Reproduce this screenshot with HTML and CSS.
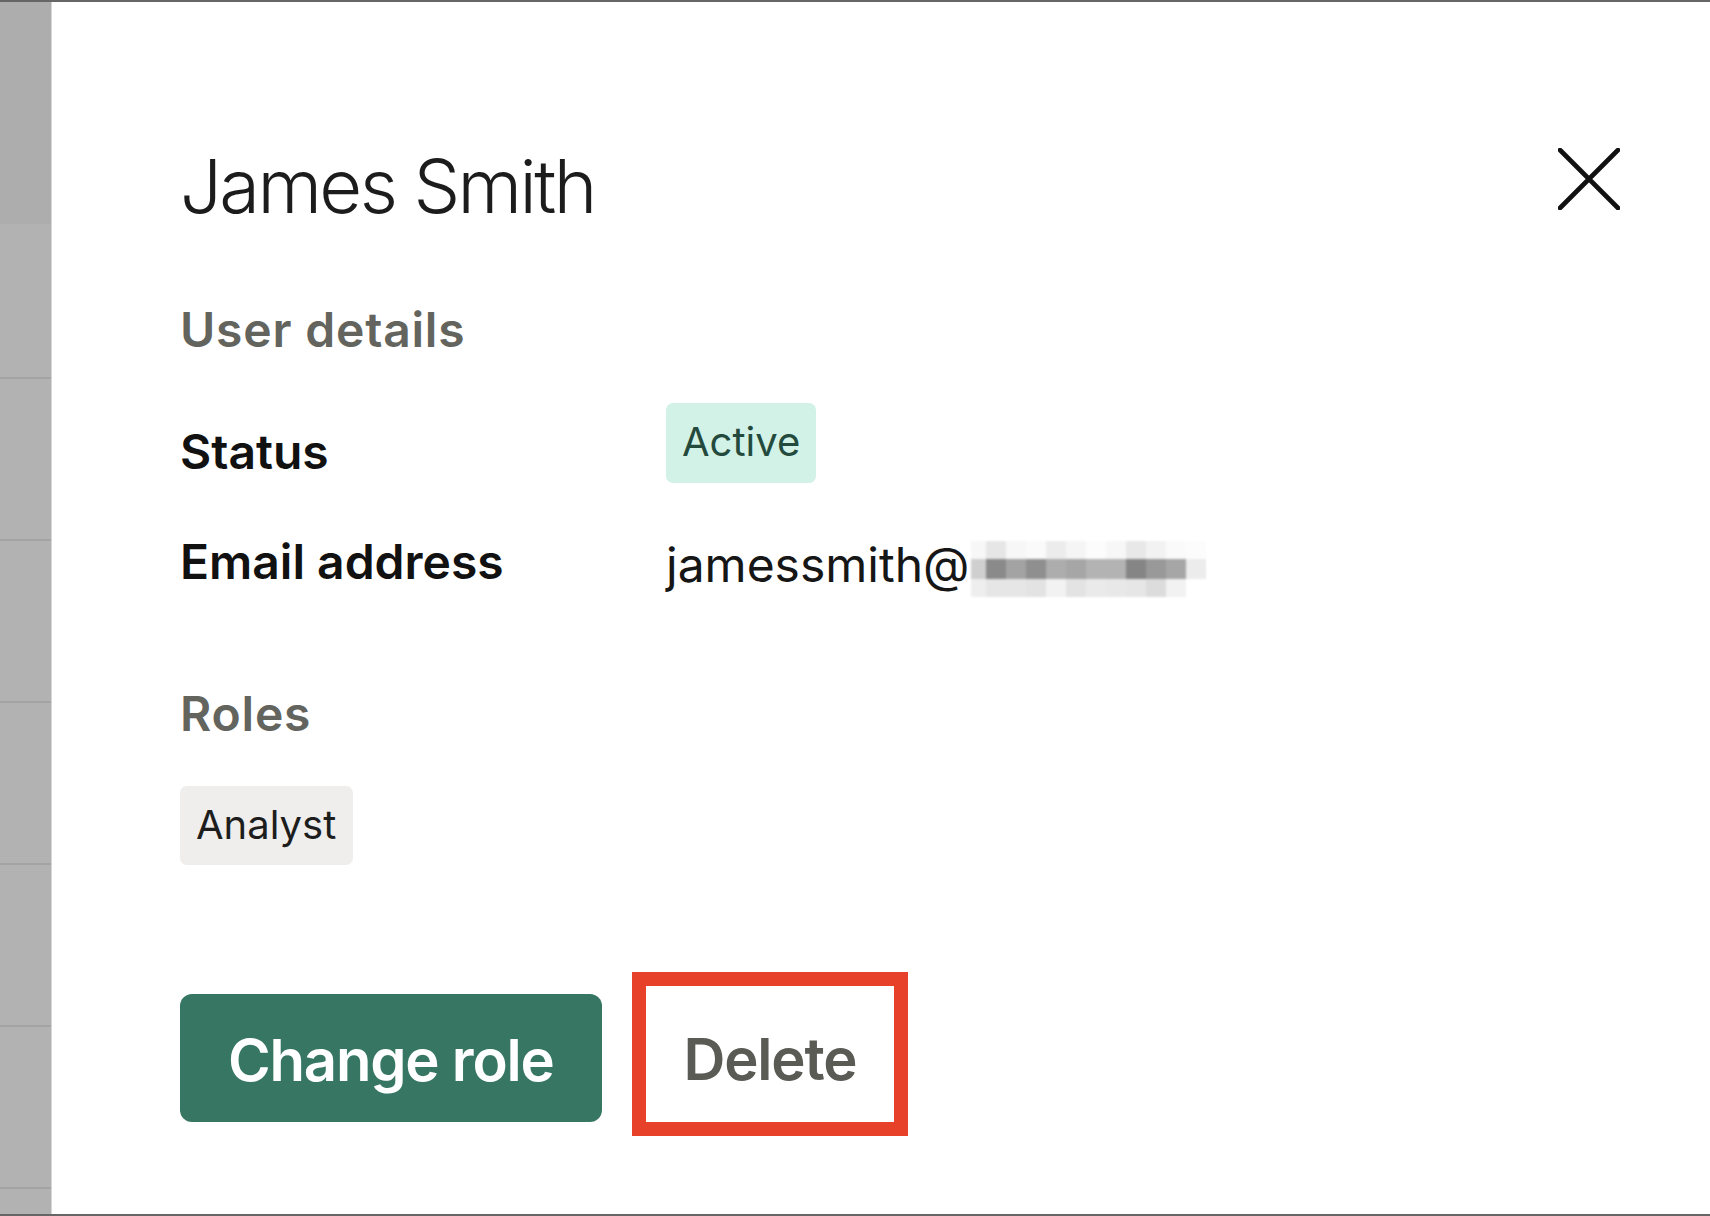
FILE: index.html
```html
<!DOCTYPE html>
<html lang="en">
<head>
    <meta charset="UTF-8">
    <meta name="viewport" content="width=device-width, initial-scale=1.0">
    <title>User details</title>
    <link rel="stylesheet" href="styles.css">
</head>
<body>
    <div class="screen">
        <div class="backdrop">
            <div class="backdrop-row first"></div>
            <div class="backdrop-row"></div>
            <div class="backdrop-row"></div>
            <div class="backdrop-row"></div>
            <div class="backdrop-row"></div>
            <div class="backdrop-row"></div>
            <div class="backdrop-row"></div>
        </div>

        <div class="drawer">
            <div class="drawer-header">
                <h1 class="user-name">James Smith</h1>
                <button class="close-btn" aria-label="Close">
                    <svg width="62" height="62" viewBox="0 0 62 62" fill="none" stroke="#111" stroke-width="4.6" stroke-linecap="round">
                        <path d="M2 2 L60 60 M60 2 L2 60"/>
                    </svg>
                </button>
            </div>

            <h2 class="section-title">User details</h2>
            <div class="detail-row status-row">
                <div class="detail-label">Status</div>
                <div class="detail-value"><span class="badge badge-active">Active</span></div>
            </div>
            <div class="detail-row">
                <div class="detail-label">Email address</div>
                <div class="detail-value email">jamessmith@<span class="mosaic">
                    <span style="background:#f7f7f7"></span><span style="background:#e6e6e6"></span><span style="background:#f7f7f7"></span><span style="background:#fafafa"></span><span style="background:#ececec"></span><span style="background:#f5f5f5"></span><span style="background:#fcfcfc"></span><span style="background:#f7f7f7"></span><span style="background:#e8e8e8"></span><span style="background:#f2f2f2"></span><span style="background:#fafafa"></span><span style="background:#fcfcfc"></span>
                    <span style="background:#cfcfcf"></span><span style="background:#8a8a8a"></span><span style="background:#a3a3a3"></span><span style="background:#8f8f8f"></span><span style="background:#adadad"></span><span style="background:#a6a6a6"></span><span style="background:#b3b3b3"></span><span style="background:#b3b3b3"></span><span style="background:#858585"></span><span style="background:#999999"></span><span style="background:#a6a6a6"></span><span style="background:#ececec"></span>
                    <span style="background:#eeeeee"></span><span style="background:#e6e6e6"></span><span style="background:#e6e6e6"></span><span style="background:#e3e3e3"></span><span style="background:#f2f2f2"></span><span style="background:#e3e3e3"></span><span style="background:#eaeaea"></span><span style="background:#e8e8e8"></span><span style="background:#e6e6e6"></span><span style="background:#dcdcdc"></span><span style="background:#f2f2f2"></span><span style="background:#ffffff"></span>
                </span></div>
            </div>

            <h2 class="section-title roles-title">Roles</h2>
            <div class="roles">
                <span class="badge badge-role">Analyst</span>
            </div>

            <div class="actions">
                <button class="btn btn-primary">Change role</button>
                <button class="btn btn-delete">Delete</button>
            </div>
        </div>
    </div>
</body>
</html>
```

FILE: styles.css
```css
* {
    box-sizing: border-box;
}
html, body {
    margin: 0;
    height: 100%;
    overflow: hidden;
}
body {
    font-family: Inter, "Noto Sans", Arial, sans-serif;
    background: white;
    color: #111;
}
.screen {
    display: flex;
    height: 1216px;
    border-top: 2px solid #666;
    border-bottom: 2px solid #666;
}

/* dimmed table behind the drawer */
.backdrop {
    width: 52px;
    flex-shrink: 0;
    background: #b2b2b2;
    border-right: 1px solid #d6d6d6;
    display: flex;
    flex-direction: column;
    overflow: hidden;
}
.backdrop-row {
    height: 162px;
    flex-shrink: 0;
    border-bottom: 2px solid #a3a3a3;
}
.backdrop-row:last-child {
    height: 26px;
    border-bottom: none;
}
.backdrop-row.first {
    height: 377px;
    background: linear-gradient(#adadad 0, #adadad 222px, #b2b2b2 222px);
}

.drawer {
    flex: 1;
    padding: 140px 0 0 128px;
}
.drawer-header {
    display: flex;
    justify-content: space-between;
    align-items: flex-start;
}
.user-name {
    margin: 0;
    font-size: 74px;
    line-height: 88px;
    font-weight: 300;
    letter-spacing: -2.6px;
    color: #1c1c1c;
}
.close-btn {
    background: none;
    border: none;
    padding: 0;
    margin: 6px 90px 0 0;
    width: 62px;
    height: 62px;
    cursor: pointer;
}
.close-btn svg {
    display: block;
}

.section-title {
    margin: 71px 0 0;
    font-size: 48px;
    line-height: 58px;
    font-weight: 600;
    letter-spacing: 0.8px;
    color: #63645e;
}
.roles-title {
    margin-top: 88px;
}

.detail-row {
    display: flex;
    align-items: flex-start;
    margin-top: 50px;
}
.status-row {
    margin-top: 44px;
}
.detail-label {
    width: 486px;
    flex-shrink: 0;
    font-size: 48px;
    line-height: 58px;
    font-weight: 600;
    color: #111;
}
.status-row .detail-label {
    margin-top: 20px;
}
.detail-value {
    font-size: 48px;
    line-height: 58px;
    color: #161616;
}
.email {
    display: flex;
    align-items: center;
}
.mosaic {
    display: grid;
    grid-template-columns: 15px repeat(11, 20px);
    grid-template-rows: 18px 20px 18px;
    margin: 8px 0 0 2px;
    filter: blur(1px);
}

.badge {
    display: inline-block;
    font-size: 40px;
    line-height: 48px;
    border-radius: 7px;
}
.badge-active {
    padding: 15px 16px 17px 16px;
    background: #d2f2e7;
    color: #234a3d;
}
.roles {
    margin-top: 43px;
}
.badge-role {
    padding: 15px 17px 16px 16px;
    background: #efeeec;
    color: #1d1d1d;
}

.actions {
    display: flex;
    align-items: flex-end;
    gap: 30px;
    margin-top: 107px;
}
.btn {
    font-family: inherit;
    font-size: 58px;
    line-height: 70px;
    font-weight: 600;
    letter-spacing: -1.2px;
    cursor: pointer;
}
.btn-primary {
    padding: 31px 48px 27px 48px;
    margin-bottom: 14px;
    background: #367663;
    color: white;
    border: none;
    border-radius: 12px;
}
.btn-delete {
    padding: 38px 38px 28px 38px;
    background: white;
    color: #5a5b55;
    border: 14px solid #e8412a;
    border-radius: 0;
}
```
